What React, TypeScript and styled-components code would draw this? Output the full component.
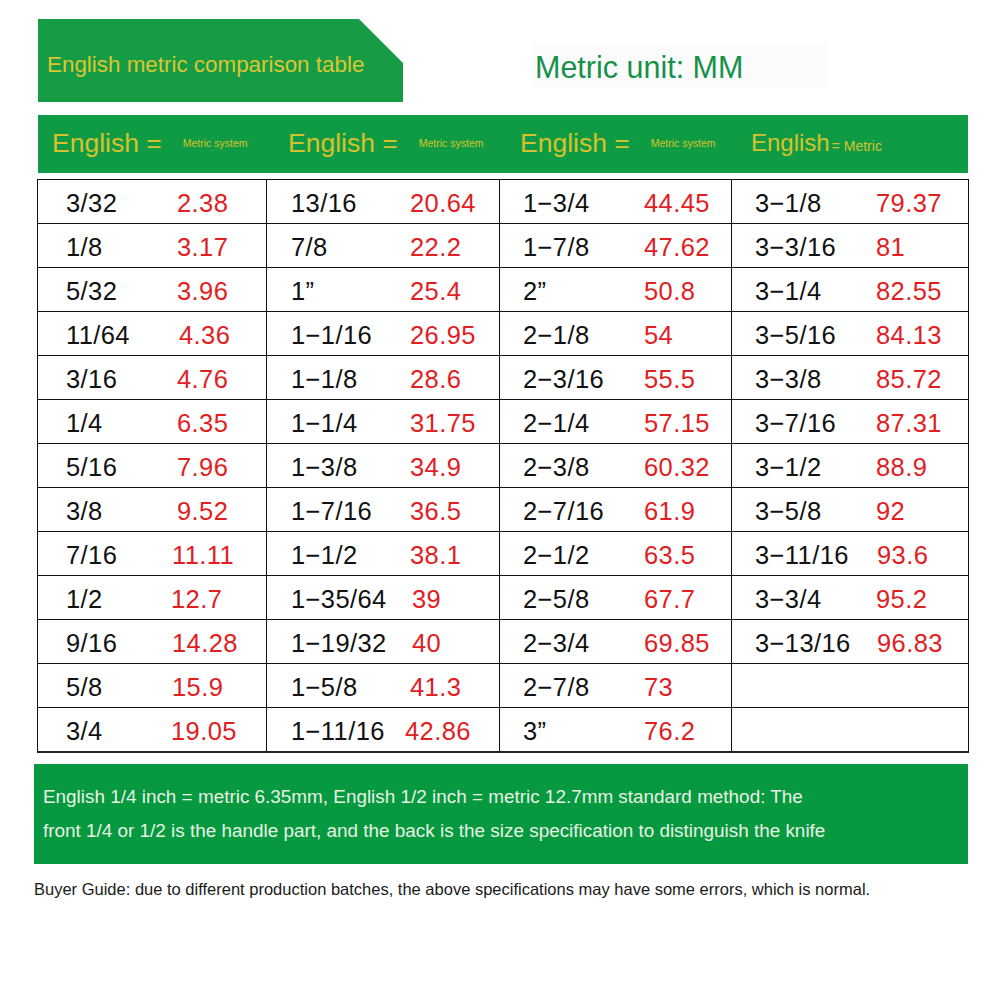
import styled, { createGlobalStyle } from 'styled-components';

const GlobalStyle = createGlobalStyle`
    html, body {
        margin: 0;
        padding: 0;
        background: #ffffff;
    }
    body {
        font-family: "Liberation Sans", Arial, sans-serif;
    }
`;

type Pair = { en: string; mm: string; shift?: number };

const columns: Pair[][] = [
    [
        { en: '3/32', mm: '2.38' },
        { en: '1/8', mm: '3.17' },
        { en: '5/32', mm: '3.96' },
        { en: '11/64', mm: '4.36', shift: 2 },
        { en: '3/16', mm: '4.76' },
        { en: '1/4', mm: '6.35' },
        { en: '5/16', mm: '7.96' },
        { en: '3/8', mm: '9.52' },
        { en: '7/16', mm: '11.11', shift: -5 },
        { en: '1/2', mm: '12.7', shift: -6 },
        { en: '9/16', mm: '14.28', shift: -5 },
        { en: '5/8', mm: '15.9', shift: -5 },
        { en: '3/4', mm: '19.05', shift: -6 },
    ],
    [
        { en: '13/16', mm: '20.64' },
        { en: '7/8', mm: '22.2' },
        { en: '1\u201D', mm: '25.4' },
        { en: '1\u22121/16', mm: '26.95' },
        { en: '1\u22121/8', mm: '28.6' },
        { en: '1\u22121/4', mm: '31.75' },
        { en: '1\u22123/8', mm: '34.9' },
        { en: '1\u22127/16', mm: '36.5' },
        { en: '1\u22121/2', mm: '38.1' },
        { en: '1\u221235/64', mm: '39', shift: 2 },
        { en: '1\u221219/32', mm: '40', shift: 2 },
        { en: '1\u22125/8', mm: '41.3' },
        { en: '1\u221211/16', mm: '42.86', shift: -5 },
    ],
    [
        { en: '1\u22123/4', mm: '44.45' },
        { en: '1\u22127/8', mm: '47.62' },
        { en: '2\u201D', mm: '50.8' },
        { en: '2\u22121/8', mm: '54' },
        { en: '2\u22123/16', mm: '55.5' },
        { en: '2\u22121/4', mm: '57.15' },
        { en: '2\u22123/8', mm: '60.32' },
        { en: '2\u22127/16', mm: '61.9' },
        { en: '2\u22121/2', mm: '63.5' },
        { en: '2\u22125/8', mm: '67.7' },
        { en: '2\u22123/4', mm: '69.85' },
        { en: '2\u22127/8', mm: '73' },
        { en: '3\u201D', mm: '76.2' },
    ],
    [
        { en: '3\u22121/8', mm: '79.37' },
        { en: '3\u22123/16', mm: '81' },
        { en: '3\u22121/4', mm: '82.55' },
        { en: '3\u22125/16', mm: '84.13' },
        { en: '3\u22123/8', mm: '85.72' },
        { en: '3\u22127/16', mm: '87.31' },
        { en: '3\u22121/2', mm: '88.9' },
        { en: '3\u22125/8', mm: '92' },
        { en: '3\u221211/16', mm: '93.6', shift: 1 },
        { en: '3\u22123/4', mm: '95.2' },
        { en: '3\u221213/16', mm: '96.83', shift: 1 },
    ],
];

// widths of each column and where the text sits inside it
const colWidths = [229, 233, 232, 237];
const colPad = [28, 24, 23, 23];
const colEnWidth = [111, 119, 121, 121];

const headerGroups = [
    { big: 'English =', small: 'Metric system' },
    { big: 'English =', small: 'Metric system' },
    { big: 'English =', small: 'Metric system' },
];

const App = () => {
    const rows = Array.from({ length: 13 }, (_, i) => i);

    return (
        <Page>
            <GlobalStyle />
            <TopRow>
                <TitleTab>
                    <TitleText>English metric comparison table</TitleText>
                </TitleTab>
                <UnitLabel>Metric unit: MM</UnitLabel>
            </TopRow>

            <HeaderBar>
                {headerGroups.map((g, i) => (
                    <HeaderGroup key={i}>
                        <HeaderBig>{g.big}</HeaderBig>
                        <HeaderSmall>{g.small}</HeaderSmall>
                    </HeaderGroup>
                ))}
                <HeaderGroup $tight>
                    <HeaderBig $size={24}>English</HeaderBig>
                    <HeaderMid>= Metric</HeaderMid>
                </HeaderGroup>
            </HeaderBar>

            <Table>
                <colgroup>
                    {colWidths.map((w, i) => (
                        <col key={i} style={{ width: w }} />
                    ))}
                </colgroup>
                <tbody>
                    {rows.map((r) => (
                        <tr key={r}>
                            {columns.map((col, c) => {
                                const item = col[r];
                                return (
                                    <Cell key={c} $pad={colPad[c]}>
                                        {item ? (
                                            <>
                                                <English $width={colEnWidth[c] + (item.shift || 0)}>{item.en}</English>
                                                <Metric>{item.mm}</Metric>
                                            </>
                                        ) : null}
                                    </Cell>
                                );
                            })}
                        </tr>
                    ))}
                </tbody>
            </Table>

            <NoteBox>
                <NoteLine>English 1/4 inch = metric 6.35mm, English 1/2 inch = metric 12.7mm standard method: The</NoteLine>
                <NoteLine>front 1/4 or 1/2 is the handle part, and the back is the size specification to distinguish the knife</NoteLine>
            </NoteBox>

            <BuyerGuide>
                Buyer Guide: due to different production batches, the above specifications may have some errors, which is normal.
            </BuyerGuide>
        </Page>
    );
};

export default App;

const Page = styled.div`
    width: 1001px;
    height: 1001px;
    box-sizing: border-box;
    padding: 19px 0 0 34px;
    display: flex;
    flex-direction: column;
    align-items: flex-start;
    background: #ffffff;
`;

const TopRow = styled.div`
    display: flex;
    align-items: flex-start;
    margin-left: 4px;
    height: 83px;
`;

const TitleTab = styled.div`
    width: 365px;
    height: 83px;
    background: #159c45;
    clip-path: polygon(0 0, 321px 0, 100% 44px, 100% 100%, 0 100%);
    display: flex;
    align-items: center;
    padding-left: 9px;
    box-sizing: border-box;
`;

const TitleText = styled.span`
    color: #dcc631;
    font-size: 22.4px;
    margin-top: 9px;
    white-space: nowrap;
`;

const UnitLabel = styled.div`
    margin-left: 129px;
    margin-top: 26px;
    width: 296px;
    height: 43px;
    padding-left: 3px;
    box-sizing: border-box;
    background: #fafbfa;
    color: #179149;
    font-size: 30.5px;
    line-height: 45px;
    white-space: nowrap;
`;

const HeaderBar = styled.div`
    margin-top: 13px;
    margin-left: 4px;
    width: 930px;
    height: 58px;
    box-sizing: border-box;
    background: #0f9b44;
    padding-left: 14px;
    display: grid;
    grid-template-columns: 236px 232px 231px 1fr;
    align-items: center;
`;

const HeaderGroup = styled.div<{ $tight?: boolean }>`
    display: flex;
    align-items: baseline;
    gap: ${(p) => (p.$tight ? '2px' : '21px')};
    white-space: nowrap;
    margin-top: -2px;
`;

const HeaderBig = styled.span<{ $size?: number }>`
    color: #d6c22c;
    font-size: ${(p) => p.$size || 26.5}px;
`;

const HeaderSmall = styled.span`
    color: #d6c22c;
    font-size: 10.5px;
    position: relative;
    top: -5px;
`;

const HeaderMid = styled.span`
    color: #d6c22c;
    font-size: 14px;
`;

const Table = styled.table`
    margin-top: 6px;
    margin-left: 3px;
    width: 931px;
    table-layout: fixed;
    border-collapse: collapse;
    border: 1px solid #222;
    border-bottom-width: 2px;
`;

const Cell = styled.td<{ $pad: number }>`
    height: 39px;
    padding: 4px 0 0 ${(p) => p.$pad}px;
    border: 1px solid #111;
    white-space: nowrap;
    font-size: 25.5px;
    letter-spacing: 0.4px;
    line-height: 39px;
    vertical-align: middle;
    overflow: hidden;
`;

const English = styled.span<{ $width: number }>`
    display: inline-block;
    width: ${(p) => p.$width}px;
    color: #111111;
`;

const Metric = styled.span`
    color: #e1201f;
`;

const NoteBox = styled.div`
    margin-top: 11px;
    width: 934px;
    height: 100px;
    box-sizing: border-box;
    background: #06993f;
    padding: 16px 0 0 9px;
`;

const NoteLine = styled.div`
    color: #e8f2e4;
    font-size: 18.9px;
    line-height: 34px;
    white-space: nowrap;
`;

const BuyerGuide = styled.div`
    margin-top: 15px;
    color: #1a1a1a;
    font-size: 16.5px;
    line-height: 20px;
    white-space: nowrap;
`;
